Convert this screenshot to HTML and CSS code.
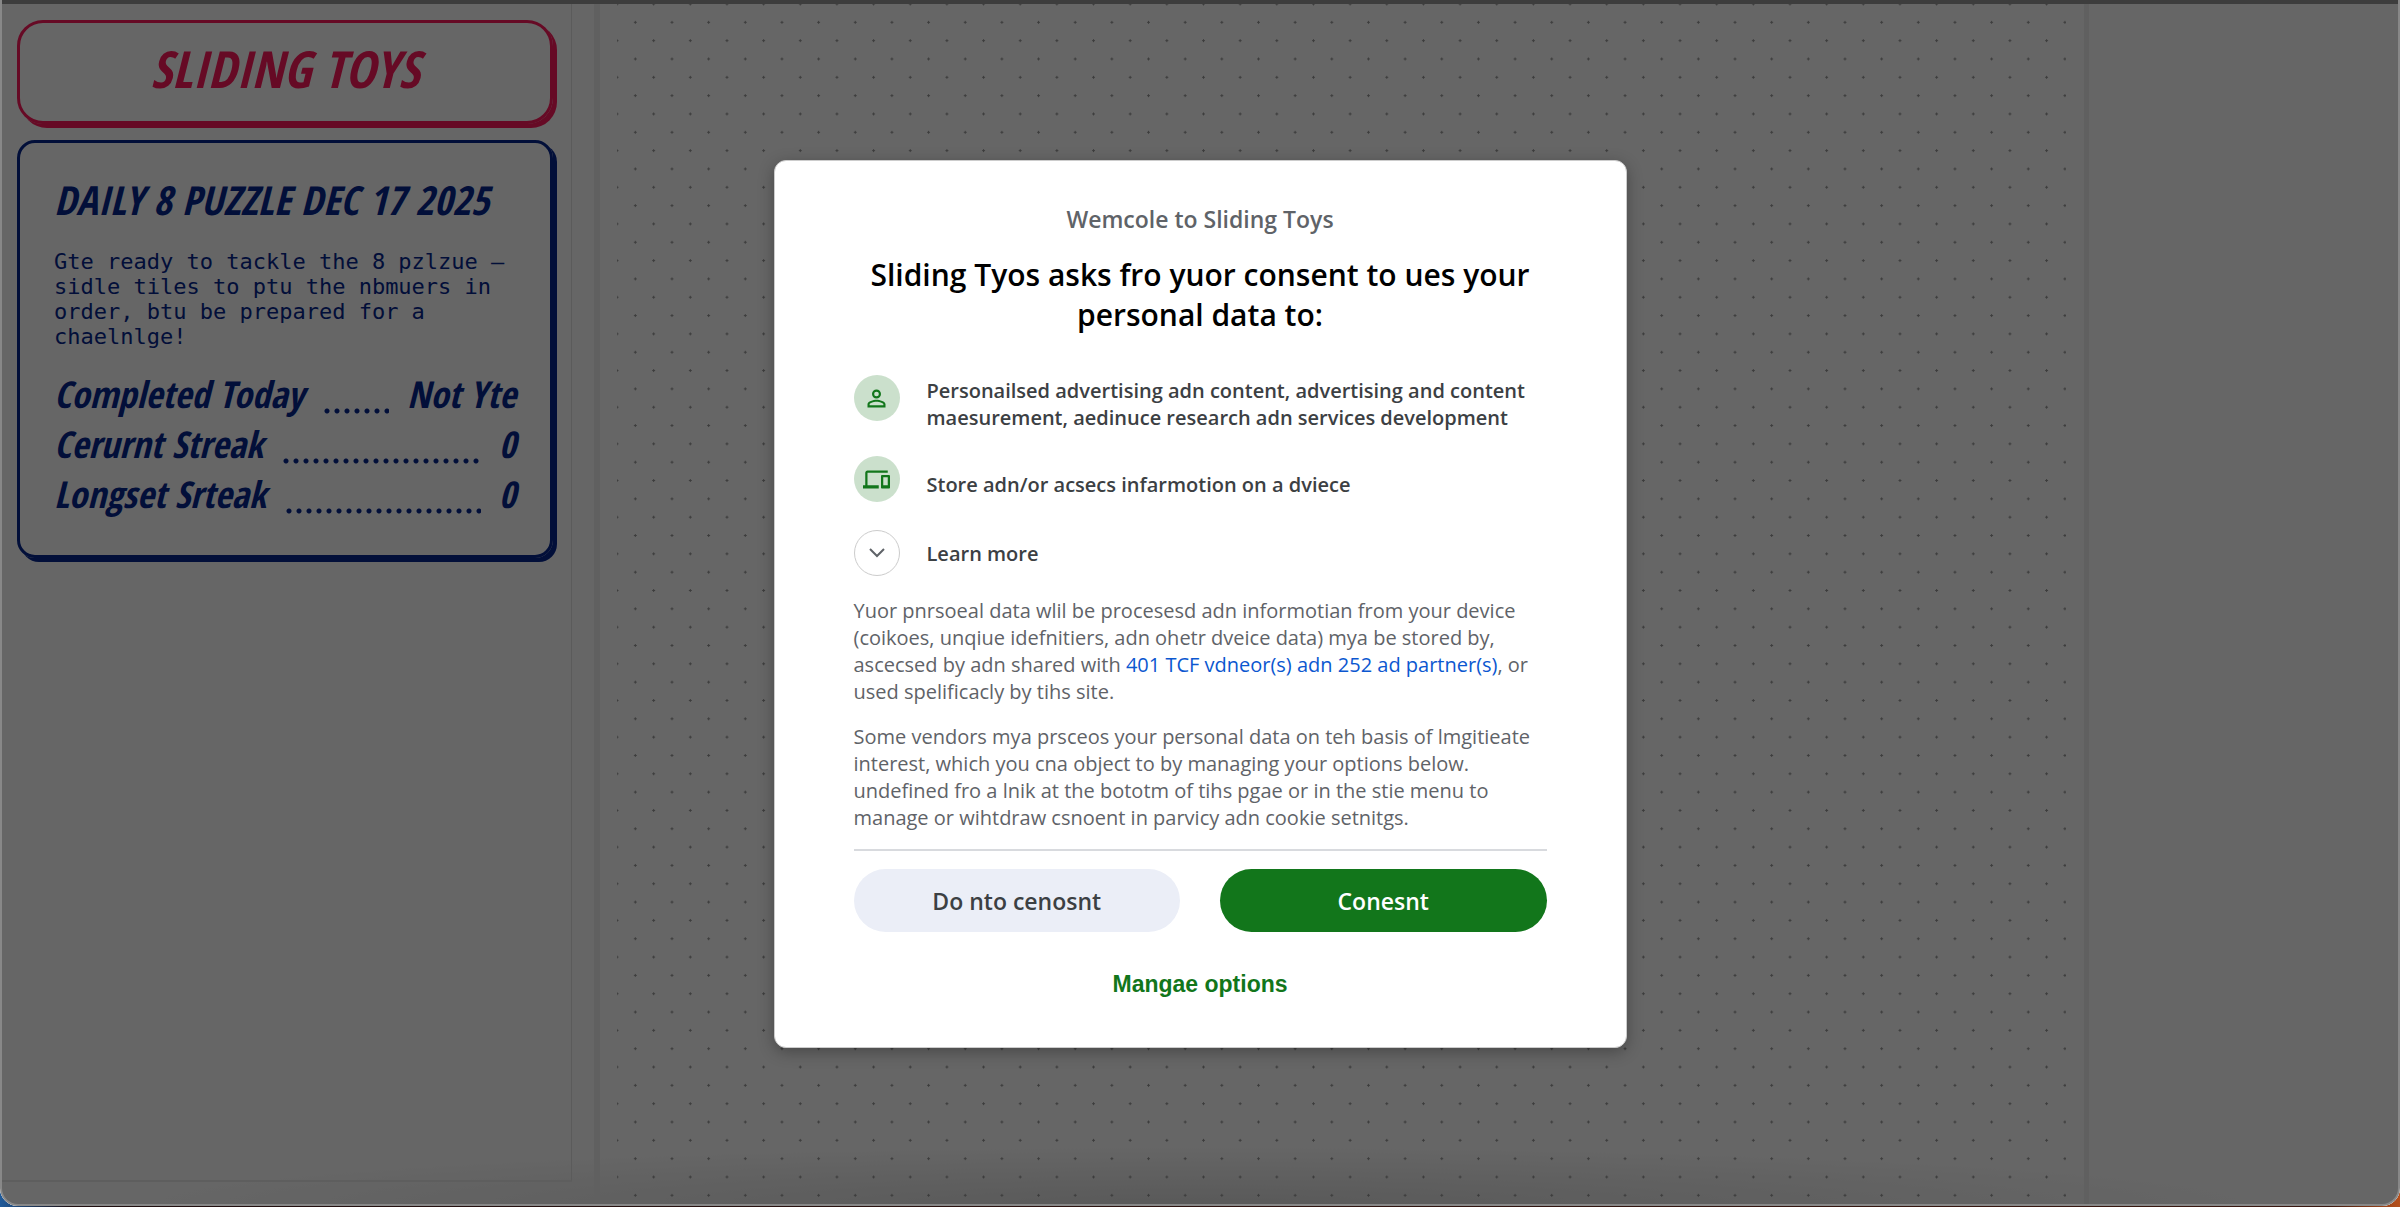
FILE: index.html
```
<!DOCTYPE html>
<html lang="en">
<head>
    <meta charset="UTF-8">
    <meta name="viewport" content="width=device-width, initial-scale=1.0">
    <title>Sliding Toys</title>
    <link rel="stylesheet" href="styles.css">
</head>
<body>
    <div class="window">
        <aside class="sidebar">
            <div class="panel">
                <header class="logo">
                    <h1>SLIDING TOYS</h1>
                </header>
                <section class="card">
                    <h2>DAILY 8 PUZZLE DEC 17 2025</h2>
                    <p>Gte ready to tackle the 8 pzlzue — sidle tiles to ptu the nbmuers in order, btu be prepared for a chaelnlge!</p>
                    <ul class="stats">
                        <li><span>Completed Today</span><i class="leader"></i><span>Not Yte</span></li>
                        <li><span>Cerurnt Streak</span><i class="leader"></i><span>0</span></li>
                        <li><span>Longset Srteak</span><i class="leader"></i><span>0</span></li>
                    </ul>
                </section>
            </div>
        </aside>
        <main class="board">
            <div class="dots"></div>
        </main>
        <aside class="ads"></aside>
    </div>

    <div class="overlay">
        <div class="dialog" role="dialog" aria-modal="true" aria-labelledby="consent-title">
            <p class="welcome">Wemcole to Sliding Toys</p>
            <h2 class="title" id="consent-title">Sliding Tyos asks fro yuor consent to ues your personal data to:</h2>
            <ul class="purposes">
                <li>
                    <span class="icon">
                        <svg viewBox="0 0 24 24"><path d="M12 5.9a2.1 2.1 0 1 1 0 4.2 2.1 2.1 0 0 1 0-4.2m0 9c2.97 0 6.1 1.46 6.1 2.1v1.1H5.9V17c0-.64 3.13-2.1 6.1-2.1M12 4C9.79 4 8 5.79 8 8s1.79 4 4 4 4-1.79 4-4-1.79-4-4-4zm0 9c-2.67 0-8 1.34-8 4v3h16v-3c0-2.66-5.33-4-8-4z"/></svg>
                    </span>
                    <span>Personailsed advertising adn content, advertising and content maesurement, aedinuce research adn services development</span>
                </li>
                <li>
                    <span class="icon">
                        <svg viewBox="0 0 24 24"><path d="M4 6h18V4H4c-1.100 0-2 .9-2 2v11H0v3h14v-3H4V6zm19 2h-6c-.55 0-1 .45-1 1v10c0 .55.45 1 1 1h6c.55 0 1-.45 1-1V9c0-.55-.45-1-1-1zm-1 9h-4v-7h4v7z"/></svg>
                    </span>
                    <span>Store adn/or acsecs infarmotion on a dviece</span>
                </li>
            </ul>
            <button class="learn-more" type="button">
                <span class="icon">
                    <svg viewBox="0 0 24 24"><path d="M5 8l7 7 7-7"/></svg>
                </span>
                <span>Learn more</span>
            </button>
            <p class="text">Yuor pnrsoeal data wlil be procesesd adn informotian from your device (coikoes, unqiue idefnitiers, adn ohetr dveice data) mya be stored by, ascecsed by adn shared with <a href="#">401 TCF vdneor(s) adn 252 ad partner(s)</a>, or used spelificacly by tihs site.</p>
            <p class="text">Some vendors mya prsceos your personal data on teh basis of lmgitieate interest, which you cna object to by managing your options below. undefined fro a lnik at the bototm of tihs pgae or in the stie menu to manage or wihtdraw csnoent in parvicy adn cookie setnitgs.</p>
            <div class="actions">
                <button class="btn" type="button">Do nto cenosnt</button>
                <button class="btn btn-primary" type="button">Conesnt</button>
            </div>
            <button class="manage" type="button">Mangae options</button>
        </div>
    </div>
</body>
</html>
```
FILE: styles.css
```
* {
    margin: 0;
    padding: 0;
    box-sizing: border-box;
}
html {
    height: 100%;
}
body {
    height: 100%;
    background: linear-gradient(90deg, #1f5a9a, #200f10 3%, #3a1810 97%, #b5501c);
    font-family: "Open Sans", sans-serif;
    position: relative;
    overflow: hidden;
}
ul {
    list-style: none;
}
button {
    border: none;
    background: none;
    font-family: inherit;
    cursor: pointer;
}
.window {
    display: flex;
    height: calc(100% - 1px);
    background: radial-gradient(ellipse 45% 60px at 50% 100%, #dedede, #fff) #fff;
    border-top: 4px solid #999;
    border-radius: 0 0 18px 18px;
}

/* sidebar */
.sidebar {
    width: 600px;
    border-right: 6px solid #f0f0f0;
    padding-bottom: 24px;
}
.panel {
    width: 572px;
    height: 100%;
    padding: 16px 18px 0 17px;
    border-right: 1px solid #e4e4e4;
    border-bottom: 2px solid #ececec;
}
.logo,
.card {
    width: 536px;
    border: 3px solid;
    box-shadow: 4px 4px 0 currentColor;
}
.logo {
    height: 104px;
    margin-bottom: 16px;
    border-radius: 26px;
    color: #ff1a5c;
    text-align: center;
}
.logo h1,
.card h2,
.stats {
    font-family: "Liberation Sans Narrow", "Open Sans Condensed", "Noto Sans", sans-serif;
    font-weight: 800;
    font-style: italic;
}
.logo h1 {
    font-size: 51px;
    line-height: 90px;
}
.card {
    padding: 32px 34px 36px;
    border-radius: 18px;
    color: #05268f;
}
.card h2 {
    font-size: 40px;
    line-height: 50px;
    margin-bottom: 24px;
    white-space: nowrap;
}
.card p {
    font-family: "DejaVu Sans Mono", monospace;
    font-size: 22px;
    line-height: 25px;
    margin-bottom: 20px;
}
.stats {
    font-size: 37px;
    line-height: 50px;
}
.stats li {
    display: flex;
}
.leader {
    flex: 1;
    height: 6px;
    margin: 39px 18px 0;
    background: radial-gradient(circle, currentColor 2px, transparent 3px) 0 0 / 10px 6px;
}

/* board */
.board {
    flex: 1;
    padding: 0 18px 0 17px;
    border-right: 5px solid #f0f0f0;
}
.dots {
    height: 100%;
    --pitch: calc(110px / 3);
    background-image:
        radial-gradient(circle, #999 1px, transparent 1px),
        radial-gradient(circle, #999 1px, transparent 1px);
    background-size: var(--pitch) var(--pitch);
    background-position: 0 0, calc(var(--pitch) / 2) calc(var(--pitch) / 2);
}
.ads {
    width: 311px;
}

/* consent dialog */
.overlay {
    position: absolute;
    inset: 0 0 1px;
    display: flex;
    align-items: center;
    justify-content: center;
    padding-top: 4px;
    background: rgba(0, 0, 0, 0.6);
    border: 2px solid #888;
    border-top: none;
    border-radius: 0 0 18px 18px;
}
.dialog {
    width: 853px;
    padding: 40px 79px 45px;
    background: #fff;
    border: 1px solid #ccc;
    border-radius: 12px;
    box-shadow: 0 4px 16px rgba(0, 0, 0, 0.3);
    color: #3c4043;
}
.welcome {
    font-size: 23px;
    font-weight: 600;
    line-height: 36px;
    color: #5f6368;
    text-align: center;
}
.title {
    margin: 18px 0 40px;
    font-size: 30px;
    font-weight: 600;
    line-height: 40px;
    color: #000;
    text-align: center;
}
.purposes li {
    display: flex;
    align-items: center;
    gap: 27px;
    min-height: 57px;
    margin-bottom: 24px;
    font-size: 20px;
    font-weight: 600;
    line-height: 27px;
}
.purposes li:last-child {
    margin-bottom: 17px;
}
.icon {
    display: flex;
    flex: none;
    align-items: center;
    justify-content: center;
    align-self: flex-start;
    width: 46px;
    height: 46px;
    border-radius: 50%;
    background: #cbe0cc;
}
.icon svg {
    width: 27px;
    height: 27px;
    fill: #12761b;
}
.learn-more {
    display: flex;
    align-items: center;
    gap: 27px;
    margin-bottom: 21px;
    font-size: 20px;
    font-weight: 600;
    line-height: 27px;
    color: #3c4043;
}
.learn-more .icon {
    border: 1px solid #ccc;
    background: none;
}
.learn-more svg {
    width: 24px;
    height: 24px;
    fill: none;
    stroke: #5f6368;
    stroke-width: 2;
}
.text {
    margin-bottom: 18px;
    font-size: 20px;
    line-height: 27px;
    color: #5f6368;
}
.text a {
    color: #0b57d0;
    text-decoration: none;
}
.actions {
    display: grid;
    grid-template-columns: 1fr 1fr;
    gap: 40px;
    padding-top: 18px;
    border-top: 2px solid #d8dade;
}
.btn {
    height: 63px;
    border-radius: 32px;
    background: #ebeef7;
    color: #3c4043;
    font-size: 23px;
    font-weight: 600;
}
.btn-primary {
    background: #12761b;
    color: #fff;
}
.manage {
    display: block;
    margin: 34px auto 0;
    font-family: "Liberation Sans", Arial, sans-serif;
    font-size: 23px;
    font-weight: bold;
    line-height: 36px;
    color: #12761b;
}
```
